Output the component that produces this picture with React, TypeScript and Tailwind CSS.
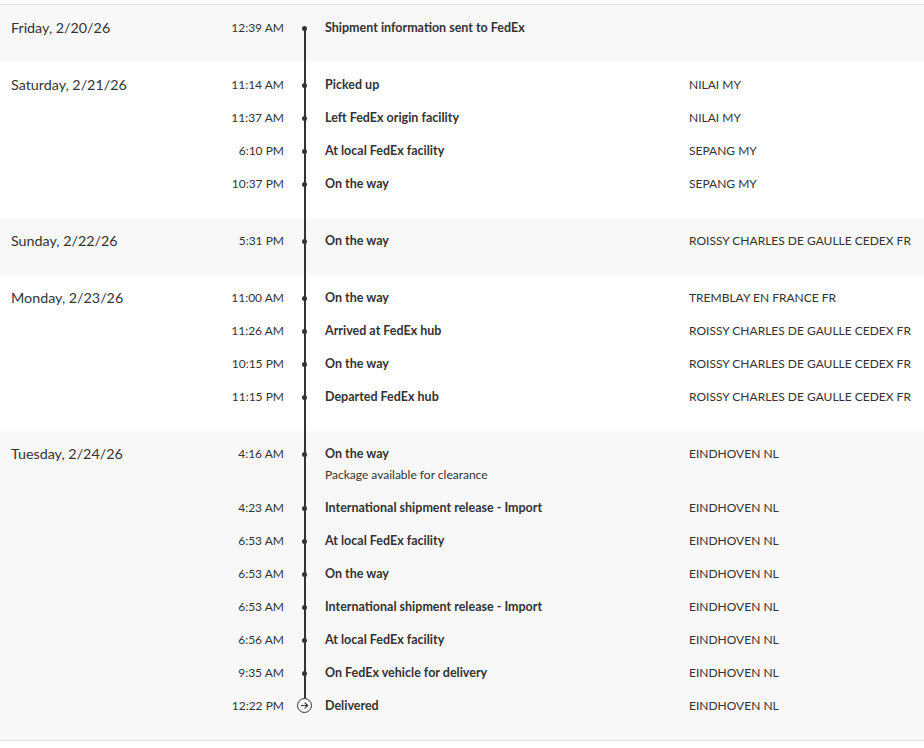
const font = { fontFamily: 'Lato, "Open Sans", sans-serif' }

type Ev = { time: string; label: string; place: string; note?: string; delivered?: boolean }
type Day = { date: string; events: Ev[] }

const days: Day[] = [
  { date: 'Friday, 2/20/26', events: [{ time: '12:39 AM', label: 'Shipment information sent to FedEx', place: '' }] },
  {
    date: 'Saturday, 2/21/26',
    events: [
      { time: '11:14 AM', label: 'Picked up', place: 'NILAI MY' },
      { time: '11:37 AM', label: 'Left FedEx origin facility', place: 'NILAI MY' },
      { time: '6:10 PM', label: 'At local FedEx facility', place: 'SEPANG MY' },
      { time: '10:37 PM', label: 'On the way', place: 'SEPANG MY' },
    ],
  },
  { date: 'Sunday, 2/22/26', events: [{ time: '5:31 PM', label: 'On the way', place: 'ROISSY CHARLES DE GAULLE CEDEX FR' }] },
  {
    date: 'Monday, 2/23/26',
    events: [
      { time: '11:00 AM', label: 'On the way', place: 'TREMBLAY EN FRANCE FR' },
      { time: '11:26 AM', label: 'Arrived at FedEx hub', place: 'ROISSY CHARLES DE GAULLE CEDEX FR' },
      { time: '10:15 PM', label: 'On the way', place: 'ROISSY CHARLES DE GAULLE CEDEX FR' },
      { time: '11:15 PM', label: 'Departed FedEx hub', place: 'ROISSY CHARLES DE GAULLE CEDEX FR' },
    ],
  },
  {
    date: 'Tuesday, 2/24/26',
    events: [
      { time: '4:16 AM', label: 'On the way', place: 'EINDHOVEN NL', note: 'Package available for clearance' },
      { time: '4:23 AM', label: 'International shipment release - Import', place: 'EINDHOVEN NL' },
      { time: '6:53 AM', label: 'At local FedEx facility', place: 'EINDHOVEN NL' },
      { time: '6:53 AM', label: 'On the way', place: 'EINDHOVEN NL' },
      { time: '6:53 AM', label: 'International shipment release - Import', place: 'EINDHOVEN NL' },
      { time: '6:56 AM', label: 'At local FedEx facility', place: 'EINDHOVEN NL' },
      { time: '9:35 AM', label: 'On FedEx vehicle for delivery', place: 'EINDHOVEN NL' },
      { time: '12:22 PM', label: 'Delivered', place: 'EINDHOVEN NL', delivered: true },
    ],
  },
]

function Marker({ delivered }: { delivered?: boolean }) {
  if (delivered) {
    return (
      <span className="relative z-10 -mt-[3px] grid h-[15px] w-[15px] place-items-center rounded-full border border-[#333] bg-[#f8f8f8]">
        <svg width="9" height="9" viewBox="0 0 10 10" fill="none" stroke="#333" strokeWidth="1.2" strokeLinecap="round" strokeLinejoin="round">
          <path d="M1.5 5h7M5.5 2l3 3-3 3" />
        </svg>
      </span>
    )
  }
  return <span className="relative z-10 -mt-px h-[5px] w-[5px] rounded-full bg-[#333]" />
}

export default function App() {
  return (
    <div className="min-h-screen bg-white pt-1 text-[#333]" style={font}>
      <div className="relative border-y border-[#e3e3e3]">
        {/* continuous timeline rail from first dot to last marker */}
        <div className="absolute left-[304px] top-[22px] h-[676px] w-[1.5px] bg-[#333]" />
        {days.map((day, i) => (
          <section
            key={day.date}
            className={`grid grid-cols-[190px_1fr] px-[11px] pb-[17px] pt-[7px] ${i % 2 === 0 ? 'bg-[#f8f8f8]' : 'bg-white'}`}
          >
            <div className="pt-[6px] text-[14.3px] leading-[20px]">{day.date}</div>
            <ol>
              {day.events.map((ev, j) => (
                <li key={j} className="grid grid-cols-[83px_41px_364px_1fr] text-[12px] leading-[15px]">
                  <span className="pt-[8px] text-right">{ev.time}</span>
                  <span className="flex h-[33px] items-center justify-center">
                    <Marker delivered={ev.delivered} />
                  </span>
                  <div className="pt-[8px]">
                    <div className="text-[12.5px] font-bold">{ev.label}</div>
                    {ev.note && <div className="mt-[6px] pb-[10px]">{ev.note}</div>}
                  </div>
                  <span className="whitespace-nowrap pt-[8px]">{ev.place}</span>
                </li>
              ))}
            </ol>
          </section>
        ))}
      </div>
    </div>
  )
}
